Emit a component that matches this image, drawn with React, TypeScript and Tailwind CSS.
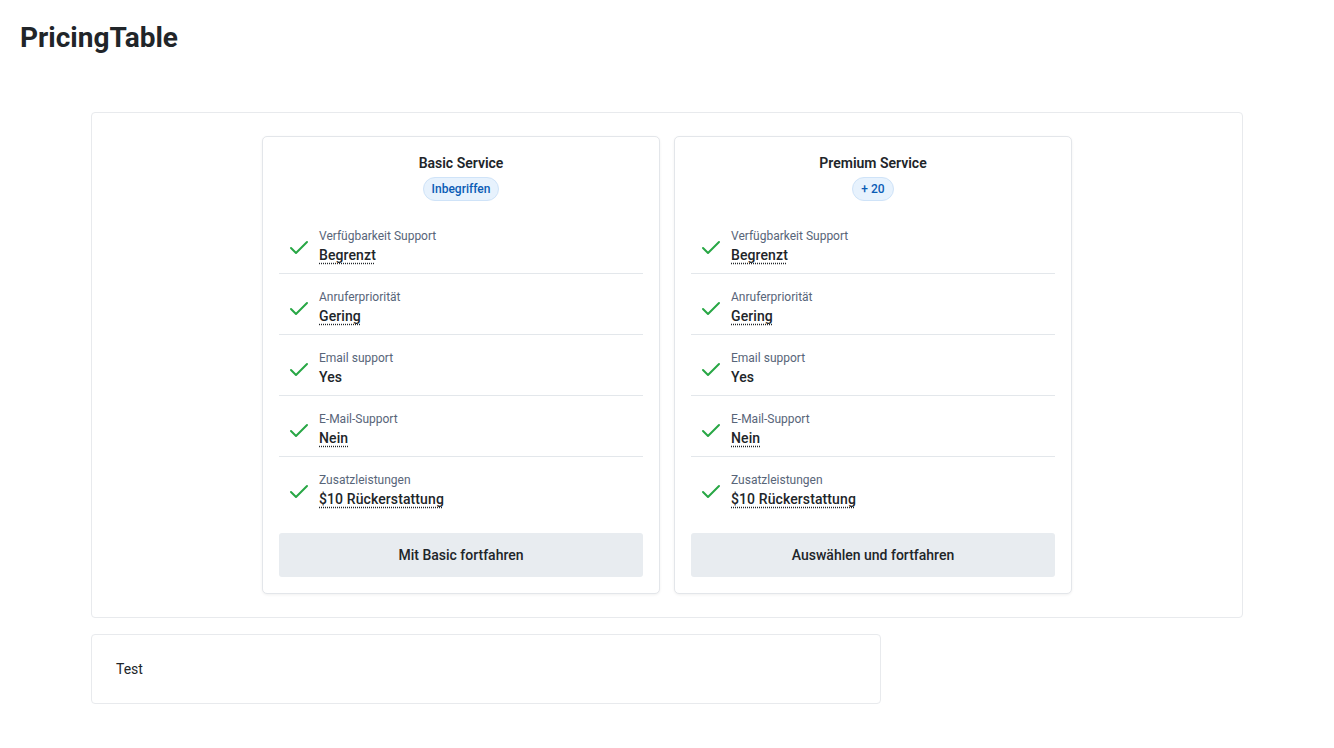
import React from "react";

type Row = { label: string; value: string; underline: boolean };

const rows: Row[] = [
  { label: "Verfügbarkeit Support", value: "Begrenzt", underline: true },
  { label: "Anruferpriorität", value: "Gering", underline: true },
  { label: "Email support", value: "Yes", underline: false },
  { label: "E-Mail-Support", value: "Nein", underline: true },
  { label: "Zusatzleistungen", value: "$10 Rückerstattung", underline: true },
];

function Check() {
  return (
    <svg width="24" height="24" viewBox="0 0 24 24" fill="none" stroke="#28a745" strokeWidth="2" strokeLinecap="round" strokeLinejoin="round" className="shrink-0 mt-2">
      <polyline points="20 6 9 17 4 12" />
    </svg>
  );
}

function Card({ title, badge, button }: { title: string; badge: string; button: string }) {
  return (
    <div className="w-[398px] bg-white border border-[#e3e6ea] rounded-[5px] shadow-[0_1px_3px_rgba(0,0,0,0.06)] p-4 flex flex-col">
      <div className="flex flex-col items-center">
        <div className="text-[14px] leading-5 font-semibold text-[#212529]">{title}</div>
        <div className="mt-1 h-6 px-2 flex items-center rounded-full bg-[#e7f2fd] border border-[#cfe3f8] text-[12px] font-medium text-[#0b5cb5]">
          {badge}
        </div>
      </div>
      <div className="mt-3 flex flex-col">
        {rows.map((r, i) => (
          <div
            key={r.label}
            className={`flex items-start gap-2 pl-2 pt-[15px] pb-[8px] ${i < rows.length - 1 ? "border-b border-[#e3e7eb]" : ""}`}
          >
            <Check />
            <div className="flex flex-col gap-[1px]">
              <div className="text-[12px] leading-4 text-[#586579]">{r.label}</div>
              <div
                className={`text-[14px] leading-5 font-medium text-[#212529] tracking-[0.1px] ${r.underline ? "underline decoration-dotted decoration-[#212529] underline-offset-[3px]" : ""}`}
              >
                {r.value}
              </div>
            </div>
          </div>
        ))}
      </div>
      <button className="mt-4 h-11 w-full rounded-[3px] bg-[#e8ecf0] text-[14px] font-medium text-[#212529]">
        {button}
      </button>
    </div>
  );
}

export default function App() {
  return (
    <div className="min-h-screen bg-white p-5 font-['Roboto',sans-serif] text-[#212529]">
      <h1 className="text-[28px] leading-9 font-bold text-[#212529]">PricingTable</h1>
      <div className="mt-14 w-[1152px] mx-auto">
        <div className="border border-[#e8eaed] rounded-[4px] py-[23px] flex justify-center gap-[14px]">
          <Card title="Basic Service" badge="Inbegriffen" button="Mit Basic fortfahren" />
          <Card title="Premium Service" badge="+ 20" button="Auswählen und fortfahren" />
        </div>
        <div className="mt-4 w-[790px] border border-[#e8eaed] rounded-[4px] p-6">
          <div className="text-[14px] leading-5 text-[#212529]">Test</div>
        </div>
      </div>
    </div>
  );
}
